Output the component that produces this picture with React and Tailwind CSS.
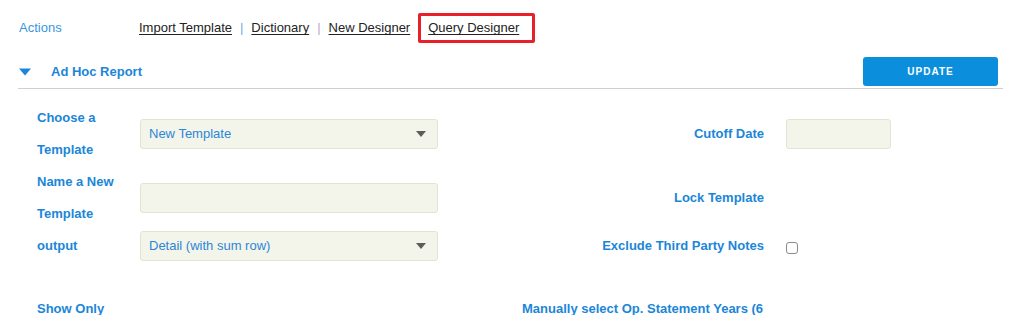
import React from 'react';

const FONT = { fontFamily: '"Liberation Sans", Arial, Helvetica, sans-serif' };

function Caret({ className }) {
  return (
    <svg viewBox="0 0 10 6" className={className}>
      <path d="M0 0 L10 0 L5 6 Z" fill="currentColor" />
    </svg>
  );
}

function Select({ value }) {
  return (
    <div className="h-[30px] w-[298px] bg-[#f3f5eb] border border-[#e1e5d1] rounded-[3px] flex items-center justify-between pl-[8px] pr-[11px]">
      <span className="text-[13px] text-[#2d86d6]">{value}</span>
      <Caret className="w-[10px] h-[6px] text-[#5b5f5a]" />
    </div>
  );
}

function Label({ children, right }) {
  return (
    <div className={`text-[13px] font-bold text-[#1b86d8] leading-[32px] ${right ? 'text-right' : ''}`}>
      {children}
    </div>
  );
}

function FormRow({ left, control, rightLabel, rightControl }) {
  return (
    <div className="flex items-center">
      <div className="w-[103px] ml-[37px]">{left}</div>
      <div className="w-[298px]">{control}</div>
      <div className="w-[326px]">{rightLabel}</div>
      <div className="ml-[22px]">{rightControl}</div>
    </div>
  );
}

export default function App() {
  return (
    <div className="w-[1025px] h-[315px] overflow-hidden bg-white" style={FONT}>
      {/* Actions bar */}
      <div className="flex items-center h-[30px] mt-[13px] px-[19px]">
        <span className="w-[120px] text-[13px] text-[#3a96df]">Actions</span>
        <div className="flex items-center text-[13px] text-[#222]">
          <a className="underline underline-offset-2">Import Template</a>
          <span className="mx-[8px] text-[#6aaee6]">|</span>
          <a className="underline underline-offset-2">Dictionary</a>
          <span className="mx-[8px] text-[#b9a9c9]">|</span>
          <a className="underline underline-offset-2">New Designer</a>
          <div className="ml-[8px] h-[30px] border-[3px] border-[#e8202a] rounded-[2px] flex items-center pl-[7px] pr-[13px]">
            <a className="underline underline-offset-2">Query Designer</a>
          </div>
        </div>
      </div>

      {/* Section header */}
      <div className="mt-[14px] mx-[18px] w-[985px] flex items-center justify-between border-b border-[#cfcfcf] h-[32px] pb-[2px]">
        <div className="flex items-center">
          <Caret className="ml-[1px] w-[12px] h-[10px] text-[#1b86d8]" />
          <span className="ml-[20px] text-[13px] font-bold text-[#1b86d8]">Ad Hoc Report</span>
        </div>
        <button className="w-[135px] h-[29px] mr-[5px] bg-[#0b8fdd] rounded-[3px] text-white text-[10px] font-bold tracking-[1px]">
          UPDATE
        </button>
      </div>

      {/* Form */}
      <div className="mt-[13px]">
        <FormRow
          left={<><Label>Choose a</Label><Label>Template</Label></>}
          control={<Select value="New Template" />}
          rightLabel={<Label right>Cutoff Date</Label>}
          rightControl={<div className="w-[105px] h-[30px] bg-[#f3f5eb] border border-[#e1e5d1] rounded-[3px]" />}
        />
        <FormRow
          left={<><Label>Name a New</Label><Label>Template</Label></>}
          control={<div className="w-[298px] h-[30px] bg-[#f3f5eb] border border-[#e1e5d1] rounded-[3px]" />}
          rightLabel={<Label right>Lock Template</Label>}
          rightControl={null}
        />
        <FormRow
          left={<Label>output</Label>}
          control={<Select value="Detail (with sum row)" />}
          rightLabel={<Label right>Exclude Third Party Notes</Label>}
          rightControl={<div className="w-[12px] h-[12px] mt-[4px] border border-[#8a8a8a] rounded-[3px] bg-white" />}
        />
        <div className="flex mt-[31px]">
          <div className="ml-[37px] w-[485px]"><Label>Show Only</Label></div>
          <div className="w-[258px]"><Label>Manually select Op. Statement Years (6 years max)</Label></div>
        </div>
      </div>
    </div>
  );
}
